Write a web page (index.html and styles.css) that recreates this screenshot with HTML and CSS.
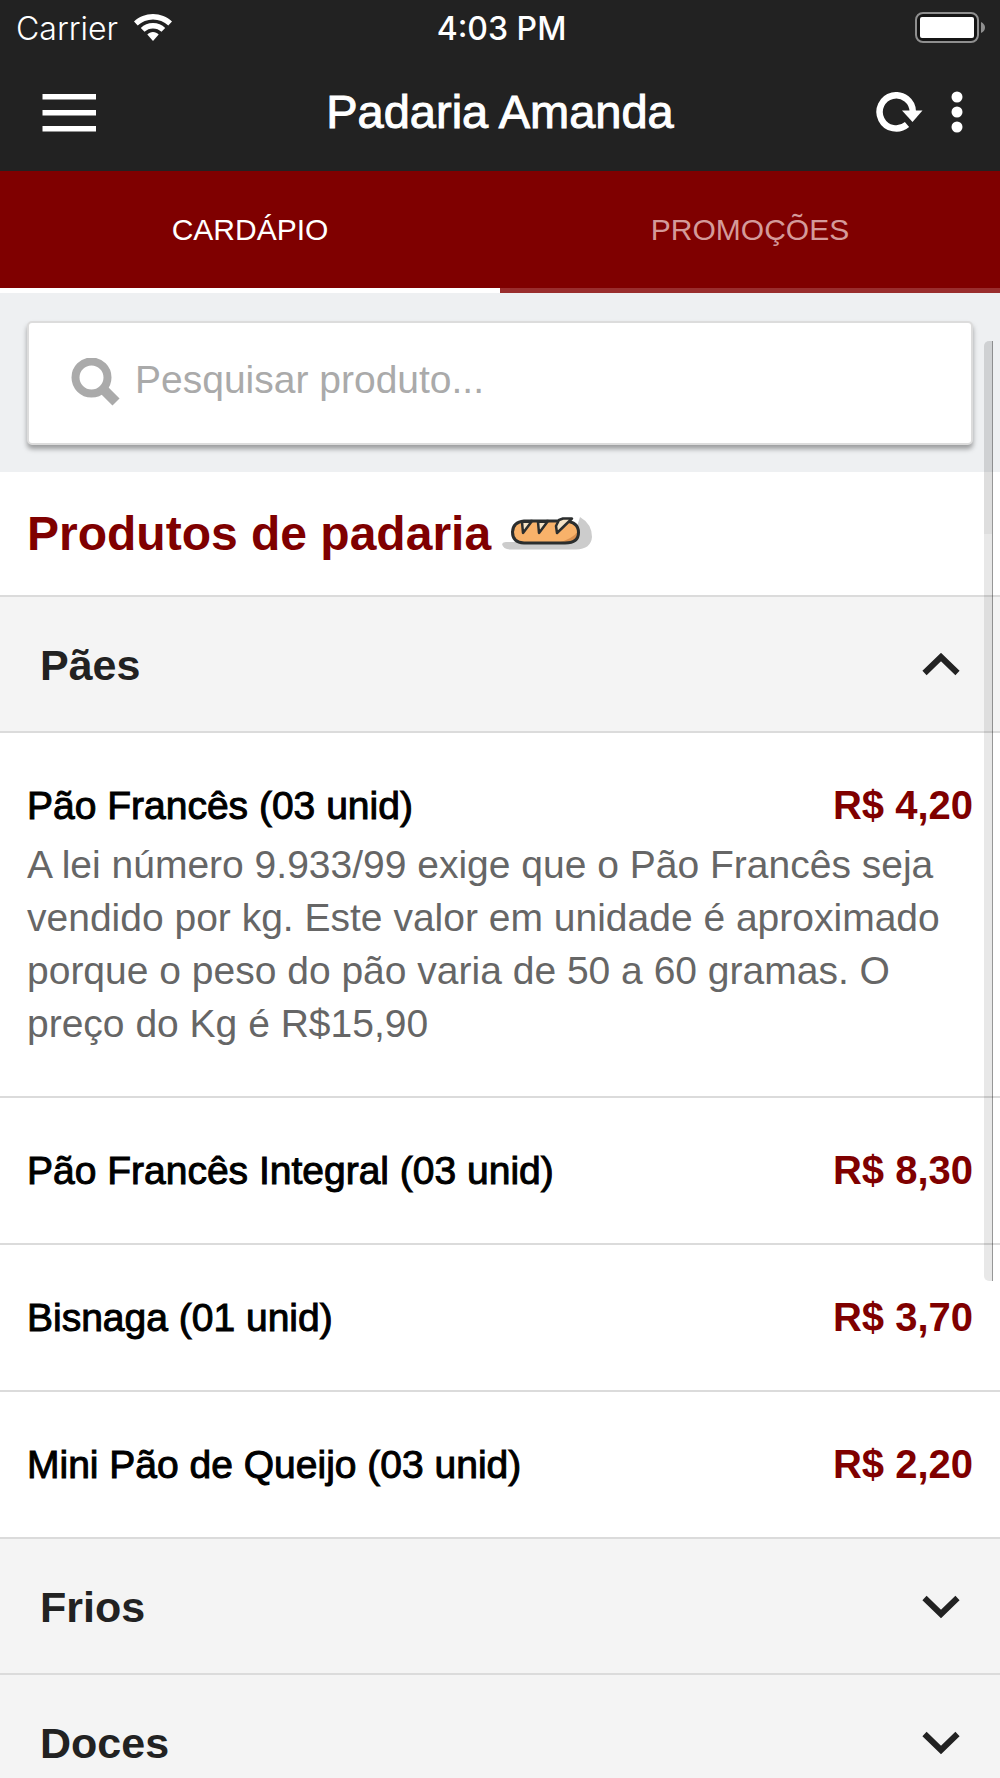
FILE: index.html
```html
<!DOCTYPE html>
<html lang="pt-BR">
<head>
<meta charset="utf-8">
<meta name="viewport" content="width=device-width, initial-scale=1">
<title>Padaria Amanda</title>
<link rel="stylesheet" href="styles.css">
</head>
<body>
<div class="app">
  <header class="topbar">
    <div class="status">
      <span class="status-carrier">Carrier
        <svg width="38" height="28" viewBox="0 0 38 28" fill="#fff" aria-hidden="true">
          <path d="M19 0C11.700 0 5 2.800 0 7.500L3.700 11.500A22.500 22.500 0 0 1 34.300 11.500L38 7.500C33 2.800 26.300 0 19 0Z"/>
          <path d="M19 9C14.300 9 10 10.800 6.800 13.900L10.500 17.800A12.400 12.400 0 0 1 27.500 17.800L31.200 13.900C28 10.800 23.700 9 19 9Z"/>
          <path d="M19 18C16.800 18 14.800 18.900 13.300 20.600L19 27L24.700 20.600C23.200 18.900 21.200 18 19 18Z"/>
        </svg>
      </span>
      <span class="status-time">4:03 PM</span>
      <span class="status-battery">
        <svg width="72" height="32" viewBox="0 0 72 32" aria-hidden="true">
          <rect x="1" y="1" width="62" height="29" rx="7" fill="#151515" stroke="#8f8f8f" stroke-width="2"/>
          <rect x="5" y="5" width="54" height="21" rx="2" fill="#fff"/>
          <path d="M66 10Q70 12 70 15.500T66 21Z" fill="#8f8f8f"/>
        </svg>
      </span>
    </div>
    <div class="navbar">
      <button class="icon-button" type="button" aria-label="Menu">
        <svg width="64" height="40" viewBox="0 0 64 40" fill="#fff"><path d="M5.500 2H59V7.500H5.500ZM5.500 18H59V23.500H5.500ZM5.500 34H59V39.500H5.500Z"/></svg>
      </button>
      <h1 class="navbar-title">Padaria Amanda</h1>
      <div class="navbar-actions">
        <button class="icon-button" type="button" aria-label="Atualizar">
          <svg width="47" height="40" viewBox="0 0 47 40"><path d="M31 32.500A16.600 16.600 0 1 1 36.800 20" fill="none" stroke="#fff" stroke-width="6.500"/><path d="M26 18.500H46.500L36.500 30Z" fill="#fff"/></svg>
        </button>
        <button class="icon-button" type="button" aria-label="Mais opções">
          <svg width="12" height="42" viewBox="0 0 12 42" fill="#fff"><circle cx="6" cy="6" r="5.500"/><circle cx="6" cy="21" r="5.500"/><circle cx="6" cy="36" r="5.500"/></svg>
        </button>
      </div>
    </div>
  </header>

  <nav class="tabs">
    <a class="tab tab-active" href="#cardapio">CARDÁPIO</a>
    <a class="tab" href="#promocoes">PROMOÇÕES</a>
  </nav>

  <main class="content" id="cardapio">
    <div class="scroll-area">
      <form class="search" role="search">
        <label class="search-box">
          <svg width="50" height="50" viewBox="0 0 50 50" aria-hidden="true"><circle cx="20.500" cy="19.500" r="16" fill="none" stroke="#aaa" stroke-width="8"/><path d="M31 30L45 44" stroke="#aaa" stroke-width="10"/></svg>
          <input class="search-input" type="search" placeholder="Pesquisar produto..." aria-label="Pesquisar produto">
        </label>
      </form>

      <h2 class="heading">Produtos de padaria
        <svg width="92" height="34" viewBox="0 0 92 34" aria-hidden="true">
          <path d="M4 25H70L78 0Q90 7 90 20Q89 32 74 32.500H8Q1 32 0 27Q1 25 4 25Z" fill="#ccc"/>
          <path d="M22 4H63Q76.500 5 76.500 15.500Q76.500 26 63 26H22Q10.500 25.500 10.500 15Q11 5 22 4Z" fill="#f8b26a"/>
          <path d="M76 14Q76 26 62 26H55Q71 22 76 14Z" fill="#d9904f"/>
          <path d="M22 4H63Q76.500 5 76.500 15.500Q76.500 26 63 26H22Q10.500 25.500 10.500 15Q11 5 22 4Z" fill="none" stroke="#2b2e2e" stroke-width="3"/>
          <path d="M20 5L21 16L30 4ZM36 5L37 16L46 4ZM57 3L54 9L55 16L70 1.500H61Z" fill="#f5e3c5" stroke="#2b2e2e" stroke-width="2.500" stroke-linejoin="round"/>
        </svg>
      </h2>

      <section>
        <button class="group" type="button" aria-expanded="true">Pães
          <svg width="38" height="24" viewBox="0 0 38 24"><path d="M2.500 20L19 4L35.500 20" fill="none" stroke="#222" stroke-width="6"/></svg>
        </button>
        <ul class="items">
          <li class="item">
            <div class="item-row"><h3 class="item-name">Pão Francês (03 unid)</h3><span class="price">R$ 4,20</span></div>
            <p class="item-text">A lei número 9.933/99 exige que o Pão Francês seja vendido por kg. Este valor em unidade é aproximado porque o peso do pão varia de 50 a 60 gramas. O preço do Kg é R$15,90</p>
          </li>
          <li class="item"><div class="item-row"><h3 class="item-name">Pão Francês Integral (03 unid)</h3><span class="price">R$ 8,30</span></div></li>
          <li class="item"><div class="item-row"><h3 class="item-name">Bisnaga (01 unid)</h3><span class="price">R$ 3,70</span></div></li>
          <li class="item"><div class="item-row"><h3 class="item-name">Mini Pão de Queijo (03 unid)</h3><span class="price">R$ 2,20</span></div></li>
        </ul>
      </section>
      <section>
        <button class="group" type="button" aria-expanded="false">Frios
          <svg width="38" height="24" viewBox="0 0 38 24"><path d="M2.500 3L19 19L35.500 3" fill="none" stroke="#222" stroke-width="6"/></svg>
        </button>
      </section>
      <section>
        <button class="group" type="button" aria-expanded="false">Doces
          <svg width="38" height="24" viewBox="0 0 38 24"><path d="M2.500 3L19 19L35.500 3" fill="none" stroke="#222" stroke-width="6"/></svg>
        </button>
      </section>
    </div>
    <div class="scrollbar" aria-hidden="true"><div class="scrollbar-thumb"></div></div>
  </main>
</div>
</body>
</html>
```
FILE: styles.css
```css
* {
  box-sizing: border-box;
}

body {
  margin: 0;
  background: #fff;
  color: #000;
  font-family: "Liberation Sans", Arial, Helvetica, sans-serif;
}

h1, h2, h3, p, ul {
  margin: 0;
  padding: 0;
}

svg {
  display: block;
  flex: none;
}

button {
  border: 0;
  padding: 0;
  background: none;
  font: inherit;
  color: inherit;
}

.app {
  display: flex;
  flex-direction: column;
  height: 100vh;
  overflow: hidden;
}

.topbar {
  flex: none;
  background: #222;
  color: #fff;
}

.status {
  display: grid;
  grid-template-columns: 1fr auto 1fr;
  align-items: center;
  height: 56px;
  padding: 0 13px 0 16px;
  font-family: Inter, "Liberation Sans", sans-serif;
  font-size: 32px;
}

.status-carrier {
  display: flex;
  align-items: center;
  gap: 16px;
  font-weight: 300;
}

.status-time {
  font-weight: 500;
}

.status-battery {
  justify-self: end;
}

.navbar {
  display: grid;
  grid-template-columns: 1fr auto 1fr;
  align-items: center;
  height: 115px;
  padding: 0 37px 4px;
}

.navbar-title {
  font-size: 47px;
  font-weight: 400;
  -webkit-text-stroke: 1px currentColor;
}

.icon-button {
  justify-self: start;
}

.navbar-actions {
  display: flex;
  align-items: center;
  justify-self: end;
  gap: 28px;
}

.tabs {
  flex: none;
  display: grid;
  grid-template-columns: 1fr 1fr;
  background: #7f0000;
}

.tab {
  padding: 42px 0 41px;
  border-bottom: 5px solid #992d2d;
  color: #d49a9a;
  font-size: 30px;
  line-height: 34px;
  text-align: center;
  text-decoration: none;
}

.tab-active {
  border-bottom-color: #fff;
  color: #fff;
}

.content {
  position: relative;
  flex: 1;
  min-height: 0;
}

.scroll-area {
  height: 100%;
  overflow-y: auto;
  scrollbar-width: none;
}

.search {
  padding: 28px 27px 27px;
  background: #eef0f2;
}

.search-box {
  display: flex;
  align-items: center;
  gap: 14px;
  height: 124px;
  padding: 0 42px;
  border: 2px solid #dcdcdc;
  border-radius: 5px;
  background: #fff;
  box-shadow: 0 4px 5px rgba(0, 0, 0, 0.35);
}

.search-input {
  flex: 1;
  min-width: 0;
  height: 60px;
  padding: 0 0 6px;
  border: 0;
  outline: 0;
  background: none;
  color: #222;
  font: 39px "Liberation Sans", Arial, sans-serif;
}

.search-input::placeholder {
  color: #aaa;
}

.heading {
  display: flex;
  align-items: center;
  gap: 11px;
  height: 123px;
  padding: 0 27px;
  color: #7f0000;
  font-size: 48px;
}

.group {
  display: flex;
  align-items: center;
  justify-content: space-between;
  width: 100%;
  height: 136px;
  padding: 2px 40px 0;
  border-top: 2px solid #dbdbdb;
  background: #f4f4f4;
  color: #222;
  font-size: 43px;
  font-weight: 700;
}

.items {
  list-style: none;
}

.item {
  padding: 46px 27px;
  border-top: 2px solid #dbdbdb;
}

.item-row {
  display: flex;
  align-items: baseline;
  justify-content: space-between;
  height: 53px;
  line-height: 53px;
}

.item-name {
  font-size: 39px;
  font-weight: 400;
  -webkit-text-stroke: 1px currentColor;
}

.price {
  color: #7f0000;
  font-size: 40px;
  font-weight: 700;
}

.item-text {
  margin-top: 6px;
  color: #666;
  font-size: 39px;
  line-height: 53px;
}

.scrollbar {
  position: absolute;
  top: 48px;
  right: 7px;
  width: 9px;
  height: 940px;
  border-right: 1px solid rgba(0, 0, 0, 0.35);
  border-radius: 5px 0 0 5px;
  background: rgba(0, 0, 0, 0.09);
}

.scrollbar-thumb {
  height: 193px;
  border-radius: 5px 0 0 0;
  background: rgba(0, 0, 0, 0.04);
}
```
